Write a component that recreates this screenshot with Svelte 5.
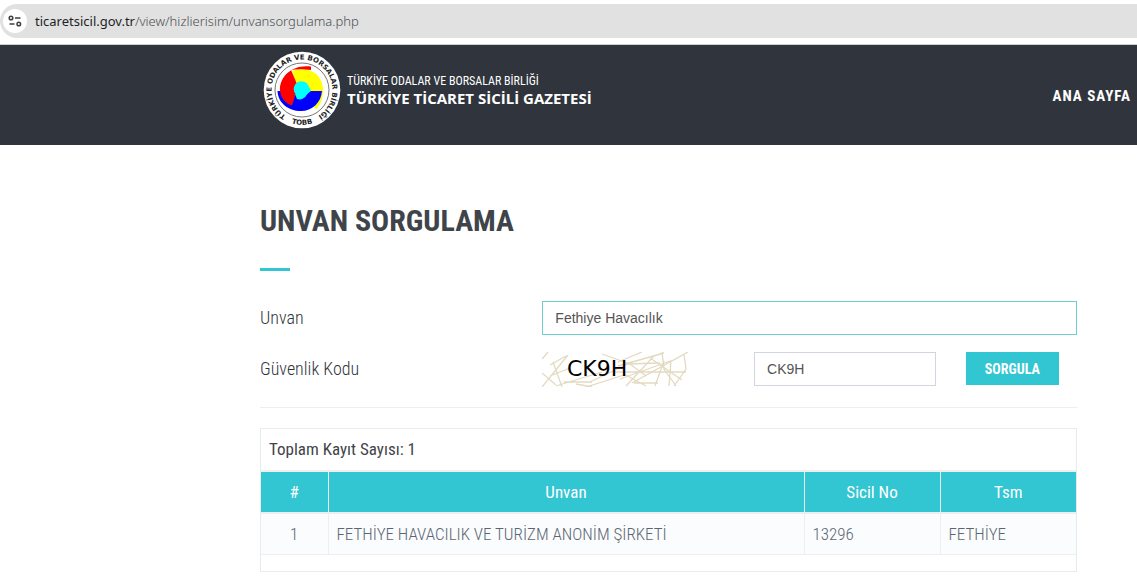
<script lang="ts">
  interface Row {
    no: number;
    unvan: string;
    sicilNo: string;
    tsm: string;
  }

  let unvan = $state('Fethiye Havacılık');
  let kod = $state('CK9H');

  const rows: Row[] = [
    { no: 1, unvan: 'FETHİYE HAVACILIK VE TURİZM ANONİM ŞİRKETİ', sicilNo: '13296', tsm: 'FETHİYE' },
  ];
</script>

<div class="toolbar">
  <div class="address">
    <button class="site-info" aria-label="Site bilgileri">
      <svg width="14" height="12" viewBox="0 0 14 12" fill="none" stroke="#3c4043" stroke-width="1.5">
        <circle cx="3" cy="3" r="1.8" />
        <path d="M7 3h5.5M1.5 9h5" />
        <circle cx="10.8" cy="9" r="1.8" />
      </svg>
    </button>
    <span class="url"><b>ticaretsicil.gov.tr</b>/view/hizlierisim/unvansorgulama.php</span>
  </div>
</div>

<header>
  <a class="brand" href="/">
    <svg class="logo" width="78" height="78" viewBox="0 0 78 78">
      <defs>
        <path id="ring-top" d="M23.8 65.400A30.500 30.500 0 1 1 54.200 65.400" />
        <path id="ring-bottom" d="M20 68.200A35 35 0 0 0 58 68.200" />
      </defs>
      <circle cx="39" cy="39" r="38.3" fill="#fff" />
      <circle cx="39" cy="39" r="27" fill="none" stroke="#777" />
      <path d="M29 20C47 14 60 24 60 39C60 47 58 52 53.500 58L51 56L57 41L39 45L33 33Z" fill="#ff0" />
      <path d="M14.500 40H59C58 52 49 60 38 60C25 60 15 52 14.500 40Z" fill="#00f" />
      <path d="M17 40C16 25 30 13 48 15.500V19C40 18 34 18 28 19L34 33L32 45L29 54.500C22 52 18 47 17 40Z" fill="#f00" />
      <circle cx="38.500" cy="38" r="7.800" fill="#0ff" />
      <path d="M32 43L34 48A8 8 0 0 0 44 43L48 40L46 36Z" fill="#0ff" />
      <text class="ring-text"><textPath href="#ring-top" startOffset="50%" text-anchor="middle">TÜRKİYE ODALAR VE BORSALAR BİRLİĞİ</textPath></text>
      <text class="ring-text"><textPath href="#ring-bottom" startOffset="50%" text-anchor="middle">TOBB</textPath></text>
    </svg>
    <span class="brand-text">
      <small>TÜRKİYE ODALAR VE BORSALAR BİRLİĞİ</small>
      <strong>TÜRKİYE TİCARET SİCİLİ GAZETESİ</strong>
    </span>
  </a>
  <nav><a href="/">ANA SAYFA</a></nav>
</header>

<main>
  <h1>UNVAN SORGULAMA</h1>

  <form onsubmit={(e) => e.preventDefault()}>
    <label for="unvan">Unvan</label>
    <input id="unvan" class="wide" type="text" bind:value={unvan} />
    <label for="kod">Güvenlik Kodu</label>
    <svg class="captcha" width="146" height="35" viewBox="0 0 146 35">
      <g fill="none" stroke="#e2dac0" stroke-width="1.3">
        <path d="M0 7L6 0M8 13L24 4M0 35L26 3M0 21L14 33M11 10L20 35M8 24L28 16" />
        <path d="M14 34L40 26L60 20M22 30H50M34 32L50 35M48 30L90 10M44 35L82 23" />
        <path d="M76 10L100 0M76 14L122 1M84 12L118 11M72 20H144M78 27L128 9" />
        <path d="M84 34L112 4M90 31L146 0M92 31H116M82 22L104 34" />
        <path d="M120 0L122 17L134 34M113 34L122 9M127 34L129 8M132 34L144 17L142 3" />
        <path d="M60 2L88 12L104 24M108 6L140 28" />
      </g>
      <text x="25" y="24">CK9H</text>
    </svg>
    <input id="kod" class="code" type="text" bind:value={kod} />
    <button class="submit" type="submit">SORGULA</button>
  </form>

  <section class="results">
    <table>
      <caption>Toplam Kayıt Sayısı: {rows.length}</caption>
      <colgroup>
        <col class="one" />
        <col />
        <col class="two" />
        <col class="two" />
      </colgroup>
      <thead>
        <tr>
          <th>#</th>
          <th>Unvan</th>
          <th>Sicil No</th>
          <th>Tsm</th>
        </tr>
      </thead>
      <tbody>
        {#each rows as row (row.no)}
          <tr>
            <td class="center">{row.no}</td>
            <td>{row.unvan}</td>
            <td>{row.sicilNo}</td>
            <td>{row.tsm}</td>
          </tr>
        {/each}
      </tbody>
    </table>
  </section>
</main>

<style>
  :global(body) {
    margin: 0;
    background: #fff;
    color: #3f444a;
    font-family: 'Roboto Condensed', 'Liberation Sans Narrow', Roboto, sans-serif;
  }
  .toolbar {
    padding: 4px 0 6px;
    border-bottom: 1px solid #cdd3d0;
  }
  .address {
    display: flex;
    align-items: center;
    gap: 8px;
    height: 34px;
    padding-left: 3px;
    border-radius: 17px 0 0 17px;
    background: #e1e1e1;
  }
  .site-info {
    display: flex;
    align-items: center;
    justify-content: center;
    width: 24px;
    height: 24px;
    padding: 0;
    border: none;
    border-radius: 50%;
    background: #fff;
  }
  .url {
    color: #4c5054;
    font-family: 'Noto Sans', sans-serif;
    font-size: 13px;
    font-weight: 300;
  }
  .url b {
    color: #1f1f1f;
    font-weight: 400;
  }
  header {
    display: flex;
    align-items: center;
    justify-content: space-between;
    box-sizing: border-box;
    height: 100px;
    padding: 0 6px 11px 263px;
    background: #30353d;
  }
  .brand {
    display: flex;
    align-items: center;
    gap: 6px;
    color: #fff;
    font-family: 'Open Sans', sans-serif;
    text-decoration: none;
  }
  .ring-text {
    fill: #222;
    font: 700 7px 'DejaVu Sans', sans-serif;
  }
  .brand-text {
    display: flex;
    flex-direction: column;
  }
  .brand-text small {
    font-family: 'Roboto Condensed', Roboto, sans-serif;
    font-size: 12px;
    line-height: 17px;
  }
  .brand-text strong {
    font-size: 15px;
    line-height: 17px;
  }
  nav {
    padding-top: 12px;
  }
  nav a {
    color: #fff;
    font-size: 15px;
    font-weight: 700;
    letter-spacing: 1px;
    text-decoration: none;
  }
  main {
    padding: 58px 60px 8px 260px;
  }
  h1 {
    margin: 0;
    font-size: 30px;
    line-height: 36px;
    font-weight: 700;
  }
  h1::after {
    content: '';
    display: block;
    width: 30px;
    height: 3px;
    margin-top: 29px;
    background: #32c5d2;
  }
  form {
    display: grid;
    grid-template-columns: repeat(12, minmax(0, 1fr));
    gap: 17px 30px;
    align-items: start;
    margin-top: 30px;
    padding-bottom: 20px;
    border-bottom: 1px solid #eee;
  }
  label {
    grid-column: span 4;
    color: #2f353b;
    font-size: 18px;
    line-height: 33px;
    font-weight: 300;
  }
  input {
    box-sizing: border-box;
    width: 100%;
    height: 34px;
    padding: 6px 12px;
    border: 1px solid #d0d5df;
    outline: none;
    background: #fff;
    color: #555;
    font: 14px 'Liberation Sans', Arial, sans-serif;
  }
  .wide {
    grid-column: span 8;
    border-color: #6fcdcd;
  }
  .captcha {
    grid-column: span 3;
  }
  .captcha text {
    fill: #000;
    font: 22px 'DejaVu Sans', sans-serif;
  }
  .code {
    grid-column: span 3;
  }
  .submit {
    grid-column: span 2;
    justify-self: start;
    width: 93px;
    height: 33px;
    padding: 0;
    border: none;
    background: #32c5d2;
    color: #fff;
    font: inherit;
    font-size: 14px;
    font-weight: 700;
  }
  .results {
    margin-top: 20px;
    padding-bottom: 16px;
    border: 1px solid #e7ecf1;
  }
  table {
    width: 100%;
    border-collapse: collapse;
    table-layout: fixed;
    font-size: 17px;
    line-height: 24px;
  }
  caption {
    padding: 8px 8px 9px;
    font-weight: 400;
    text-align: left;
  }
  .one {
    width: 67px;
  }
  .two {
    width: 136px;
  }
  th {
    padding: 8px;
    border-top: 2px solid #eee;
    border-bottom: 2px solid #eee;
    border-right: 1px solid #eee;
    background: #32c5d2;
    color: #fff;
    font-weight: 400;
  }
  td {
    padding: 8px;
    border-right: 1px solid #eee;
    border-bottom: 1px solid #eee;
    background: #fbfcfd;
    color: #5a6673;
    font-weight: 300;
  }
  th:last-child,
  td:last-child {
    border-right: none;
  }
  .center {
    text-align: center;
  }
</style>
